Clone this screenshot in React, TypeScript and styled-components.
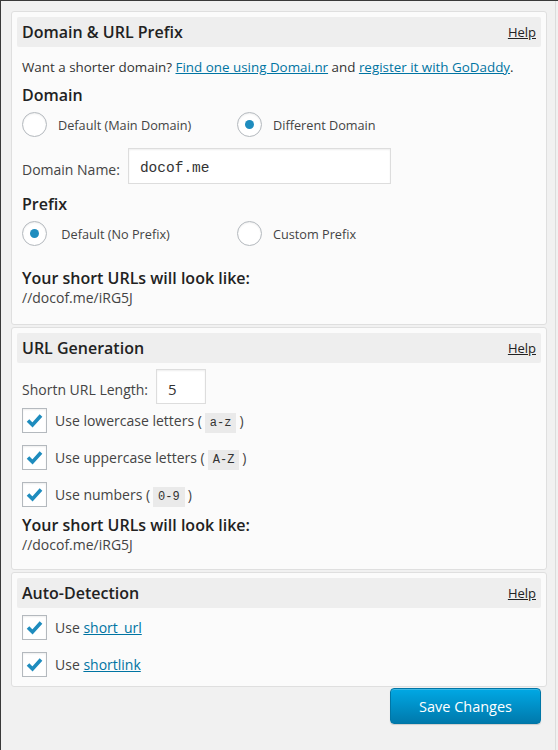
import React from "react";
import styled, { createGlobalStyle } from "styled-components";

const Global = createGlobalStyle`
  html, body { margin: 0; padding: 0; }
  body {
    background: #f1f1f1;
    border-top: 1px solid #3a3a3a;
    border-left: 1px solid #3a3a3a;
    min-height: 749px;
    font-family: "Open Sans", "Noto Sans", sans-serif;
    color: #444;
    font-size: 13px;
  }
  * { box-sizing: border-box; }
`;

const Wrap = styled.div`
  width: 555px;
  min-height: 749px;
  border-right: 1px solid #dcdcdc;
  padding: 10px 0 0 10px;
`;

const Column = styled.div`
  width: 536px;
  display: flex;
  flex-direction: column;
`;

const Panel = styled.section<{ $pb: number }>`
  background: #fbfbfb;
  border: 1px solid #dfdfdf;
  border-radius: 3px;
  padding: 5px 5px ${(p) => p.$pb}px 5px;
  & + & { margin-top: 2px; }
`;

const Header = styled.div`
  height: 30px;
  background: #eeeeee;
  border-radius: 2px;
  display: flex;
  align-items: center;
  justify-content: space-between;
  padding: 0 5px;
`;

const Title = styled.h3`
  margin: 0;
  font-size: 16px;
  font-weight: 600;
  color: #222;
  line-height: 30px;
`;

const Help = styled.a`
  font-size: 13px;
  color: #222;
  text-decoration: underline;
`;

const Body = styled.div`
  padding: 0 5px;
`;

const Intro = styled.p`
  margin: 10px 0 0;
  line-height: 20px;
  font-size: 13.4px;
  color: #333;
`;

const Link = styled.a`
  color: #0074a2;
  text-decoration: underline;
`;

const SubHead = styled.h4<{ $mt: number }>`
  margin: ${(p) => p.$mt}px 0 0;
  font-size: 16px;
  font-weight: 600;
  color: #222;
  line-height: 22px;
`;

const RadioRow = styled.div`
  margin-top: 6px;
  display: grid;
  grid-template-columns: 215px auto;
  height: 25px;
`;

const Option = styled.label`
  display: flex;
  align-items: center;
  gap: 11px;
  font-size: 12.7px;
  color: #444;
`;

const RadioCircle = styled.span<{ $on?: boolean }>`
  width: 25px;
  height: 25px;
  border-radius: 50%;
  border: 1px solid #b4b9be;
  background: #fff;
  box-shadow: inset 0 1px 2px rgba(0, 0, 0, 0.07);
  display: flex;
  align-items: center;
  justify-content: center;
  flex: none;
  &::after {
    content: "";
    display: ${(p) => (p.$on ? "block" : "none")};
    width: 9px;
    height: 9px;
    border-radius: 50%;
    background: #1e8cbe;
  }
`;

const FieldRow = styled.div<{ $mt: number }>`
  margin-top: ${(p) => p.$mt}px;
  display: flex;
  align-items: center;
  gap: 8px;
  font-size: 14px;
  color: #444;
`;

const FieldLabel = styled.span`
  padding-top: 6px;
`;

const TextBox = styled.div<{ $w: number; $h: number; $mono?: boolean }>`
  width: ${(p) => p.$w}px;
  height: ${(p) => p.$h}px;
  border: 1px solid #dddddd;
  background: #fff;
  box-shadow: inset 0 1px 2px rgba(0, 0, 0, 0.07);
  padding: 6px 11px 0;
  font-family: ${(p) =>
    p.$mono ? `"Liberation Mono", "DejaVu Sans Mono", monospace` : `"Open Sans", sans-serif`};
  font-size: ${(p) => (p.$mono ? "14.5px" : "15px")};
  line-height: 26px;
  color: #333;
`;

const ResultHead = styled.div<{ $mt: number }>`
  margin-top: ${(p) => p.$mt}px;
  font-size: 16px;
  font-weight: 600;
  color: #222;
  line-height: 19px;
`;

const ResultUrl = styled.div`
  font-size: 14px;
  line-height: 19px;
  color: #444;
`;

const CheckRow = styled.label<{ $mt: number }>`
  margin-top: ${(p) => p.$mt}px;
  display: flex;
  align-items: center;
  gap: 8px;
  height: 25px;
  font-size: 14px;
  color: #444;
`;

const Box = styled.span`
  width: 25px;
  height: 25px;
  border: 1px solid #b4b9be;
  background: #fff;
  box-shadow: inset 0 1px 2px rgba(0, 0, 0, 0.07);
  flex: none;
  display: flex;
  align-items: center;
  justify-content: center;
`;

const Code = styled.code`
  font-family: "Liberation Mono", "DejaVu Sans Mono", monospace;
  font-size: 12px;
  background: #eaeaea;
  padding: 3px 5px;
  color: #333;
  margin: 0 3px;
`;

const Footer = styled.div`
  display: flex;
  justify-content: flex-end;
  padding-right: 6px;
  margin-top: 1px;
`;

const SaveButton = styled.button`
  width: 151px;
  height: 36px;
  border-radius: 4px;
  border: 1px solid #0076a6;
  background: linear-gradient(to bottom, #00a8e4, #0079ac);
  color: #fff;
  font-family: "Open Sans", sans-serif;
  font-size: 14.5px;
  box-shadow: inset 0 1px 0 rgba(120, 200, 230, 0.5), 0 1px 1px rgba(0, 0, 0, 0.15);
  padding: 0;
`;

const Check = () => (
  <svg width="17" height="15" viewBox="0 0 17 15">
    <path d="M2 7.5 L6.5 12 L15 2.5" fill="none" stroke="#1e8cbe" strokeWidth="3.6" strokeLinecap="butt" strokeLinejoin="miter" />
  </svg>
);

const CheckItem: React.FC<{ mt: number; children: React.ReactNode }> = ({ mt, children }) => (
  <CheckRow $mt={mt}>
    <Box>
      <Check />
    </Box>
    <span>{children}</span>
  </CheckRow>
);

export default function App() {
  return (
    <>
      <Global />
      <Wrap>
        <Column>
          <Panel $pb={17}>
            <Header>
              <Title>Domain &amp; URL Prefix</Title>
              <Help href="#">Help</Help>
            </Header>
            <Body>
              <Intro>
                Want a shorter domain? <Link href="#">Find one using Domai.nr</Link> and{" "}
                <Link href="#">register it with GoDaddy</Link>.
              </Intro>
              <SubHead $mt={7}>Domain</SubHead>
              <RadioRow>
                <Option>
                  <RadioCircle />
                  Default (Main Domain)
                </Option>
                <Option>
                  <RadioCircle $on />
                  Different Domain
                </Option>
              </RadioRow>
              <FieldRow $mt={11}>
                <FieldLabel>Domain Name:</FieldLabel>
                <TextBox $w={263} $h={36} $mono>
                  docof.me
                </TextBox>
              </FieldRow>
              <SubHead $mt={9}>Prefix</SubHead>
              <RadioRow>
                <Option>
                  <RadioCircle $on />
                  &nbsp;Default (No Prefix)
                </Option>
                <Option>
                  <RadioCircle />
                  Custom Prefix
                </Option>
              </RadioRow>
              <ResultHead $mt={23}>Your short URLs will look like:</ResultHead>
              <ResultUrl>//docof.me/iRG5J</ResultUrl>
            </Body>
          </Panel>

          <Panel $pb={15}>
            <Header>
              <Title>URL Generation</Title>
              <Help href="#">Help</Help>
            </Header>
            <Body>
              <FieldRow $mt={6}>
                <FieldLabel>Shortn URL Length:</FieldLabel>
                <TextBox $w={50} $h={35}>
                  5
                </TextBox>
              </FieldRow>
              <CheckItem mt={4}>
                Use lowercase letters (<Code>a-z</Code>)
              </CheckItem>
              <CheckItem mt={12}>
                Use uppercase letters (<Code>A-Z</Code>)
              </CheckItem>
              <CheckItem mt={12}>
                Use numbers (<Code>0-9</Code>)
              </CheckItem>
              <ResultHead $mt={9}>Your short URLs will look like:</ResultHead>
              <ResultUrl>//docof.me/iRG5J</ResultUrl>
            </Body>
          </Panel>

          <Panel $pb={9}>
            <Header>
              <Title>Auto-Detection</Title>
              <Help href="#">Help</Help>
            </Header>
            <Body>
              <CheckItem mt={7}>
                Use <Link href="#">short_url</Link>
              </CheckItem>
              <CheckItem mt={12}>
                Use <Link href="#">shortlink</Link>
              </CheckItem>
            </Body>
          </Panel>
          <Footer>
            <SaveButton>Save Changes</SaveButton>
          </Footer>
        </Column>
      </Wrap>
    </>
  );
}
